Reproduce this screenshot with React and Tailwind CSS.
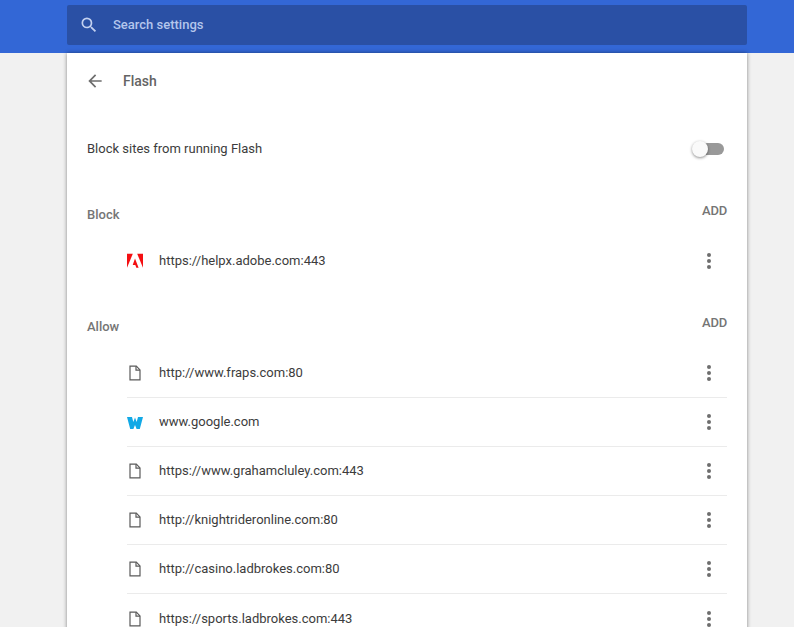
const FileIcon = () => (
  <svg width="16" height="16" viewBox="0 0 16 16" fill="none" stroke="#5a5a5a" strokeWidth="1.2">
    <path d="M3 1.2h6.3L13 4.9v9.9H3z" />
    <path d="M9 1.2v4h4" />
  </svg>
);

const AdobeIcon = () => (
  <svg width="16" height="16" viewBox="0 0 16 16" fill="#f40f12">
    <path d="M0 .8h5.8L0 14.8z" />
    <path d="M10.2.8H16v14z" />
    <path d="M8 5.6l3.6 9.2H9.3l-1-2.7H5.7z" />
  </svg>
);

const WixIcon = () => (
  <svg width="16" height="16" viewBox="0 0 16 16" fill="#12a9e6">
    <path d="M0 3h5l1.3 5L8 3.6 9.7 8 11 3h5l-3.2 12H9.6L8 11l-1.6 4H3.2z" />
  </svg>
);

const Dots = () => (
  <div className="flex flex-col gap-[2px] items-center w-[4px]">
    <span className="w-[4px] h-[4px] rounded-full bg-[#6e6e6e]" />
    <span className="w-[4px] h-[4px] rounded-full bg-[#6e6e6e]" />
    <span className="w-[4px] h-[4px] rounded-full bg-[#6e6e6e]" />
  </div>
);

const Row = ({ icon, url, last }) => (
  <div className={`h-[49px] flex items-center ${last ? "" : "border-b border-[#ebebeb]"}`}>
    <div className="w-[32px] shrink-0 flex">{icon}</div>
    <span className="text-[13px] text-[#3c3c3c]">{url}</span>
    <div className="ml-auto mr-[16px]">
      <Dots />
    </div>
  </div>
);

const Section = ({ title, height }) => (
  <div className={`flex justify-between ${height}`}>
    <div className="text-[13px] font-medium text-[#757575] pt-[16px]">{title}</div>
    <div className="text-[13px] font-medium text-[#757575] pt-[12px] tracking-[-0.2px]">ADD</div>
  </div>
);

const allowed = [
  { icon: <FileIcon />, url: "http://www.fraps.com:80" },
  { icon: <WixIcon />, url: "www.google.com" },
  { icon: <FileIcon />, url: "https://www.grahamcluley.com:443" },
  { icon: <FileIcon />, url: "http://knightrideronline.com:80" },
  { icon: <FileIcon />, url: "http://casino.ladbrokes.com:80" },
  { icon: <FileIcon />, url: "https://sports.ladbrokes.com:443" },
];

export default function App() {
  return (
    <div className="h-[627px] overflow-hidden bg-[#f1f1f1] font-['Roboto',sans-serif]">
      <header className="h-[53px] bg-[#3367d6] pl-[67px] pr-[47px] pt-[5px]">
        <div className="h-[40px] bg-[#2a50a5] rounded-[2px] flex items-center pl-[12px]">
          <svg width="20" height="20" viewBox="0 0 24 24" fill="#c3d1f0">
            <path d="M15.5 14h-.79l-.28-.27A6.471 6.471 0 0 0 16 9.5 6.5 6.5 0 1 0 9.5 16c1.61 0 3.09-.59 4.23-1.57l.27.28v.79l5 4.99L20.49 19l-4.99-5zm-6 0C7.01 14 5 11.99 5 9.5S7.01 5 9.5 5 14 7.01 14 9.5 11.99 14 9.5 14z" />
          </svg>
          <span className="ml-[14px] text-[13px] font-medium text-[#b4c6ec]">Search settings</span>
        </div>
      </header>

      <main className="ml-[67px] mr-[47px] bg-white shadow-[0_0_4px_rgba(0,0,0,0.45)] h-[600px]">
        <div className="h-[56px] flex items-center pl-[18px]">
          <svg width="20" height="20" viewBox="0 0 24 24" fill="#6e6e6e">
            <path d="M20 11H7.83l5.59-5.59L12 4l-8 8 8 8 1.41-1.41L7.83 13H20v-2z" />
          </svg>
          <span className="ml-[18px] text-[14px] font-medium text-[#646464]">Flash</span>
        </div>

        <div className="h-[80px] flex items-center justify-between pl-[20px] pr-[23px]">
          <span className="text-[13px] text-[#3c3c3c]">Block sites from running Flash</span>
          <div className="relative w-[32px] h-[12px] ml-auto">
            <div className="absolute left-[2px] right-0 top-0 h-[12px] rounded-full bg-[#999]" />
            <div className="absolute left-0 top-[-2px] w-[16px] h-[16px] rounded-full bg-[#fafafa] shadow-[0_1px_3px_rgba(0,0,0,0.45)]" />
          </div>
        </div>

        <div className="pl-[20px] pr-[20px]">
          <Section title="Block" height="h-[47px]" />
          <div className="pl-[40px] pb-[16px]">
            <Row icon={<AdobeIcon />} url="https://helpx.adobe.com:443" last />
          </div>
          <Section title="Allow" height="h-[48px]" />
          <div className="pl-[40px]">
            {allowed.map((a, i) => (
              <Row key={i} icon={a.icon} url={a.url} last={i === allowed.length - 1} />
            ))}
          </div>
        </div>
      </main>
    </div>
  );
}
